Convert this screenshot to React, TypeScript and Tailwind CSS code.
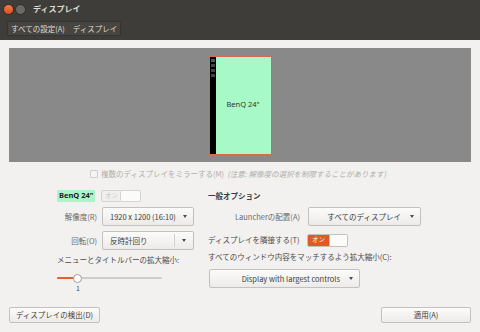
import React from "react";

const F = { fontFamily: '"Noto Sans CJK JP", "Noto Sans", sans-serif' };

function Arrow() {
  return <div className="w-0 h-0 border-l-[2.5px] border-r-[2.5px] border-t-[3px] border-l-transparent border-r-transparent border-t-[#4a4a4a]" />;
}

function Combo({ w, text, sep, center }: { w: string; text: string; sep?: boolean; center?: boolean }) {
  return (
    <div
      className={`${w} h-[19px] flex items-center rounded-[2px] border border-[#c4c1bc] bg-gradient-to-b from-[#fbfbfa] to-[#edebe9] text-[7.5px] text-[#3c3c3c]`}
    >
      <div className={`flex-1 ${center ? "text-right pr-[7px]" : "pl-[7px]"} whitespace-nowrap`}>{text}</div>
      {sep && <div className="w-px h-[13px] bg-[#d4d1cc]" />}
      <div className={`${sep ? "w-[18px]" : "w-[12px] pr-[4px]"} flex justify-center`}>
        <Arrow />
      </div>
    </div>
  );
}

export default function App() {
  return (
    <div className="w-[480px] h-[332px] flex flex-col bg-[#f2f1f0] overflow-hidden" style={F}>
      {/* title bar */}
      <div className="h-[18px] bg-[#3e3d39] flex items-center pl-[3px]">
        <div className="w-[11px] h-[11px] rounded-full bg-gradient-to-b from-[#f47c4c] to-[#df4a17] border border-[#2d2c29]" />
        <div className="w-[11px] h-[11px] rounded-full bg-[#6a6964] border border-[#2d2c29] ml-[1px]" />
        <div className="ml-[7px] text-[8px] font-bold text-[#dfdbd2]">ディスプレイ</div>
      </div>
      {/* toolbar */}
      <div className="h-[22px] bg-[#3e3d39] flex items-center pl-[7px] pb-[1px]">
        <div className="h-[15px] px-[3px] flex items-center gap-[8px] rounded-[2px] bg-[#464541] border border-[#35342f] text-[7.5px] text-[#dfdbd2]">
          <span>すべての設定(A)</span>
          <span>ディスプレイ</span>
        </div>
      </div>
      {/* content */}
      <div className="flex-1 flex flex-col px-[9px] pt-[8px]">
        <div className="h-[114px] bg-[#8a8989] flex justify-center items-center">
          <div className="w-[63px] h-[99px] border border-[#d9694d] flex">
            <div className="w-[6px] bg-black flex flex-col gap-[2px] pt-[2px] pl-[1px]">
              <div className="w-[4px] h-[3px] bg-[#555]" />
              <div className="w-[4px] h-[3px] bg-[#444]" />
              <div className="w-[4px] h-[3px] bg-[#444]" />
              <div className="w-[4px] h-[3px] bg-[#444]" />
            </div>
            <div className="flex-1 bg-[#a7f9c8] flex items-center justify-center text-[7.5px] text-[#333]" style={{ fontFamily: '"Noto Sans", sans-serif' }}>
              BenQ 24"
            </div>
          </div>
        </div>
        {/* mirror */}
        <div className="h-[22px] flex items-center pl-[81px] pt-[1px] text-[7.5px] text-[#b0aeaa] whitespace-nowrap">
          <div className="w-[8px] h-[8px] border border-[#cfcdc9] bg-[#f5f4f3] rounded-[1px] mr-[3px]" />
          <span>複数のディスプレイをミラーする(M)</span>
          <span className="italic ml-[3px]">(注意: 解像度の選択を制限することがあります)</span>
        </div>
        {/* lower */}
        <div className="flex pl-[48px] pt-[6px]">
          {/* left */}
          <div className="w-[151px] flex flex-col">
            <div className="h-[12px] flex items-center">
              <div className="h-[12px] px-[2px] bg-[#abf6c8] flex items-center text-[7.5px] font-bold text-[#222]" style={{ fontFamily: '"Noto Sans", sans-serif' }}>
                BenQ 24"
              </div>
              <div className="ml-[6px] w-[40px] h-[12px] flex rounded-[2px] border border-[#d6d4d0] bg-[#f0efee]">
                <div className="flex-1 text-[6.5px] text-[#c8c6c2] flex items-center justify-center">オン</div>
                <div className="w-[20px] h-full bg-[#fbfbfa] border-l border-[#d6d4d0] rounded-[2px]" />
              </div>
            </div>
            <div className="mt-[5px] flex items-center">
              <div className="w-[40px] text-right text-[7.5px] text-[#6a6a6a] whitespace-nowrap">解像度(R)</div>
              <div className="ml-[5px]">
                <Combo w="w-[92px]" text="1920 x 1200 (16:10)" />
              </div>
            </div>
            <div className="mt-[5px] flex items-center">
              <div className="w-[40px] text-right text-[7.5px] text-[#6a6a6a] whitespace-nowrap">回転(O)</div>
              <div className="ml-[5px]">
                <Combo w="w-[92px]" text="反時計回り" sep />
              </div>
            </div>
            <div className="mt-[3px] h-[13px] flex items-center text-[7.5px] text-[#4a4a4a] whitespace-nowrap">
              メニューとタイトルバーの拡大縮小:
            </div>
            <div className="mt-[7px] relative w-[105px] h-[10px] flex items-center">
              <div className="w-full h-[2px] bg-[#cfcdca] rounded-full" />
              <div className="absolute left-0 w-[18px] h-[2px] bg-[#e0632e] rounded-full" />
              <div className="absolute left-[16px] w-[9px] h-[9px] rounded-full bg-white border border-[#a09e9a]" />
            </div>
            <div className="pl-[19px] text-[7px] text-[#4a4a4a] leading-[10px]">1</div>
          </div>
          {/* right */}
          <div className="flex flex-col">
            <div className="h-[12px] flex items-center text-[7.5px] font-bold text-[#3c3c3c]">一般オプション</div>
            <div className="mt-[5px] flex items-center">
              <div className="w-[92px] text-right text-[7.5px] text-[#6a6a6a] whitespace-nowrap">Launcherの配置(A)</div>
              <div className="ml-[8px]">
                <Combo w="w-[113px]" text="すべてのディスプレイ" center />
              </div>
            </div>
            <div className="mt-[7px] h-[14px] flex items-center">
              <div className="text-[7.5px] text-[#4a4a4a] whitespace-nowrap w-[99px]">ディスプレイを隣接する(T)</div>
              <div className="w-[41px] h-[13px] flex rounded-[2px] border border-[#c4c1bc] overflow-hidden">
                <div className="w-[21px] bg-[#e05a26] text-[6.5px] text-white flex items-center justify-center">オン</div>
                <div className="flex-1 bg-[#fbfbfa] border-l border-[#c4c1bc]" />
              </div>
            </div>
            <div className="mt-[3px] h-[13px] flex items-center text-[7.5px] text-[#4a4a4a] whitespace-nowrap">
              すべてのウィンドウ内容をマッチするよう拡大縮小(C):
            </div>
            <div className="mt-[6px] ml-[1px]">
              <Combo w="w-[151px]" text="Display with largest controls" center />
            </div>
          </div>
        </div>
        <div className="flex-1" />
        {/* bottom buttons */}
        <div className="flex justify-between items-center pb-[9px]">
          <div className="w-[91px] h-[16px] rounded-[2px] border border-[#c4c1bc] bg-gradient-to-b from-[#fbfbfa] to-[#edebe9] flex items-center justify-center text-[7.5px] text-[#3c3c3c]">
            ディスプレイの検出(D)
          </div>
          <div className="w-[90px] h-[16px] rounded-[2px] border border-[#c4c1bc] bg-gradient-to-b from-[#fbfbfa] to-[#edebe9] flex items-center justify-center text-[7.5px] text-[#3c3c3c]">
            適用(A)
          </div>
        </div>
      </div>
    </div>
  );
}
